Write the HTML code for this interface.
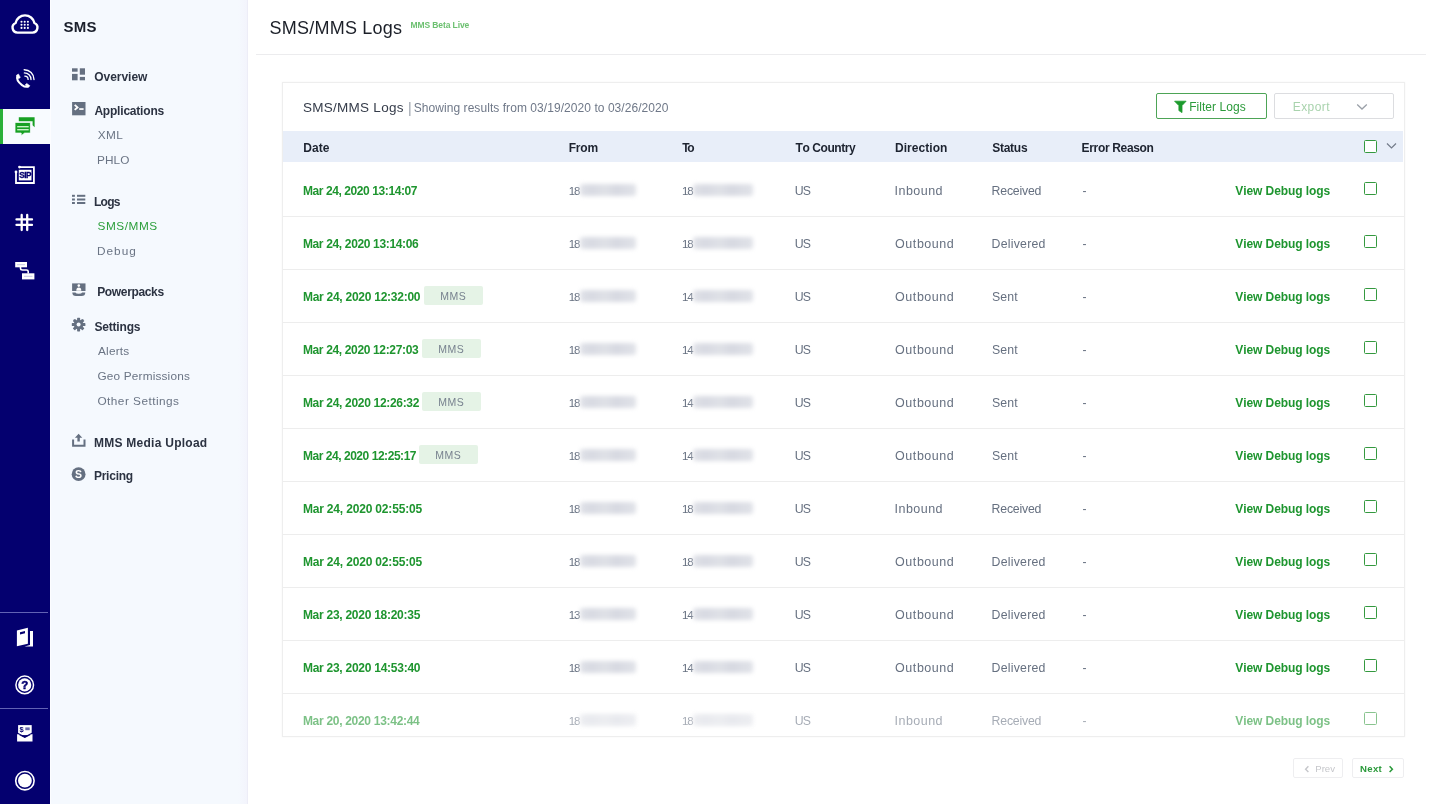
<!DOCTYPE html>
<html><head><meta charset="utf-8"><title>SMS/MMS Logs</title>
<style>
html,body{margin:0;padding:0;width:1440px;height:804px;overflow:hidden;background:#fff;font-family:"Liberation Sans", sans-serif;}
#root{position:absolute;left:0;top:0;width:1440px;height:804px;will-change:transform;}
.t{position:absolute;white-space:nowrap;font-kerning:none;}
.blur{position:absolute;height:12px;background:linear-gradient(90deg,#e0e2e8 0,#d8dae2 20%,#dfe1e7 45%,#d7d9e1 65%,#dddfe6 85%,#e0e2e8 100%);border-radius:3px;filter:blur(1.9px);}
</style></head><body><div id="root">
<div style="position:absolute;left:0;top:0;width:50px;height:804px;background:#04006f"></div><div style="position:absolute;left:0;top:109px;width:50px;height:35px;background:#f8fbff"></div><div style="position:absolute;left:0;top:109px;width:3px;height:35px;background:#2bb03a"></div><div style="position:absolute;left:0;top:612px;width:48px;height:1px;background:#6262b4"></div><div style="position:absolute;left:0;top:708px;width:48px;height:1px;background:#6262b4"></div><svg style="position:absolute;left:0;top:0" width="50" height="804" viewBox="0 0 50 804">
<!-- cloud logo -->
<path d="M17.5,32.6 A5,5 0 0 1 15.6,23 A9.6,9.6 0 0 1 34.4,23 A5,5 0 0 1 32.5,32.6 Z" fill="none" stroke="#fff" stroke-width="2.4" stroke-linejoin="round"/>
<g fill="#fff">
<circle cx="21.5" cy="21.7" r="1.05"/><circle cx="24.7" cy="21.7" r="1.05"/><circle cx="27.9" cy="21.7" r="1.05"/>
<circle cx="21.5" cy="24.8" r="1.05"/><circle cx="24.7" cy="24.8" r="1.05"/><circle cx="27.9" cy="24.8" r="1.05"/>
<circle cx="21.5" cy="27.9" r="1.05"/><circle cx="24.7" cy="27.9" r="1.05"/><circle cx="27.9" cy="27.9" r="1.05"/>
</g>
<!-- phone -->
<path d="M17.4,75.6 C16.3,78.8 18.6,82.6 22,85.1 C24.6,87 27,87.2 28.4,86.1" fill="none" stroke="#fff" stroke-width="2" stroke-linecap="round"/>
<path d="M16.6,75.6 L18.4,74 L20.3,77.4 L18.6,78.7 Z" fill="#fff" stroke="#fff" stroke-width="0.6" stroke-linejoin="round"/>
<path d="M25.2,85 L26.7,83.4 L29.8,85.7 L28.3,87.3 Z" fill="#fff" stroke="#fff" stroke-width="0.6" stroke-linejoin="round"/>
<g fill="none" stroke="#fff" stroke-width="1.35" stroke-linecap="round">
<path d="M24.2,69.7 A9.8,9.8 0 0 1 34,79.5"/>
<path d="M24.4,72.9 A6.6,6.6 0 0 1 31,79.5"/>
<path d="M24.8,76.1 A3.3,3.3 0 0 1 28.1,79.4"/>
</g>
<!-- chat (active) -->
<path d="M18.8,117.2 H34.6 V127.3 L32.6,125.3 V121.3 H18.8 Z" fill="#18a024"/>
<path d="M15,122.4 H30.4 V133.1 H24.6 L21.2,135.8 V133.1 H15 Z" fill="#18a024" stroke="#f8fbff" stroke-width="0.8"/>
<rect x="17.2" y="126" width="11.5" height="1.4" fill="#c9f2c9"/>
<rect x="17.2" y="129" width="11.5" height="1.4" fill="#c9f2c9"/>
<!-- SIP -->
<path d="M19.5,167.2 H33.9 V183 H16 V172.2" fill="none" stroke="#fff" stroke-width="1.8"/>
<circle cx="19.5" cy="167.1" r="1.4" fill="#fff"/><circle cx="16" cy="172" r="1.4" fill="#fff"/>
<rect x="18.8" y="169.8" width="12.7" height="10.6" fill="#fff"/>
<text x="25.15" y="178.4" text-anchor="middle" font-family="Liberation Sans" font-weight="700" font-size="8.2" fill="#04006f" stroke="#04006f" stroke-width="0.3" letter-spacing="-0.5">SIP</text>
<!-- hash -->
<g stroke="#fff" stroke-width="2.3" stroke-linecap="round">
<path d="M21.7,215 V230"/><path d="M27.2,215 V230"/><path d="M16.5,219.4 H32"/><path d="M16.5,224.9 H32"/>
</g>
<!-- flow -->
<rect x="15.2" y="262" width="11.8" height="5.3" fill="#fff"/>
<rect x="22" y="273.3" width="12.4" height="6.1" fill="#fff"/>
<path d="M20.5,267 V268.3 Q20.5,270 22.5,270 H26.5 Q28.2,270 28.2,271.6 V273.5" fill="none" stroke="#fff" stroke-width="1.6"/>
<g fill="#c8c8e8"><rect x="17" y="264.2" width="8" height="1"/><rect x="24" y="275.8" width="8.5" height="1"/></g>
<!-- docs -->
<path d="M16.9,630.6 L27.9,627.8 V643.7 L16.9,646.2 Z" fill="#fff"/>
<rect x="20" y="632" width="5" height="2.2" fill="#04006f" transform="skewY(-14) translate(0,5.3)"/>
<path d="M30,631 H33 V646.4 H24.5 L30,645 Z" fill="#fff"/>
<!-- help -->
<circle cx="24.7" cy="684.9" r="8.8" fill="none" stroke="#fff" stroke-width="1.5"/>
<circle cx="24.7" cy="684.9" r="6.6" fill="#fff"/>
<text x="24.7" y="689.2" text-anchor="middle" font-family="Liberation Sans" font-weight="700" font-size="11.5" fill="#04006f" stroke="#04006f" stroke-width="0.5">?</text>
<!-- envelope -->
<rect x="18.1" y="725.1" width="13.6" height="10" fill="#fff"/>
<text x="21.5" y="731.8" text-anchor="middle" font-family="Liberation Sans" font-weight="700" font-size="7.5" fill="#04006f">$</text>
<rect x="25.3" y="727.4" width="4.4" height="2.8" fill="#6a6aae"/>
<path d="M17.1,733.9 L24.8,737.9 L32.5,733.9 V741.6 H17.1 Z" fill="#fff"/>
<path d="M17.1,732.9 L24.8,736.9 L32.5,732.9" fill="none" stroke="#04006f" stroke-width="1.1"/>
<!-- avatar -->
<circle cx="24.9" cy="780.7" r="9.2" fill="none" stroke="#fff" stroke-width="1.6"/>
<circle cx="24.9" cy="780.7" r="6.9" fill="#fff"/>
</svg><div style="position:absolute;left:50px;top:0;width:198px;height:804px;background:linear-gradient(to right,#f5f9fe 0,#f5f9fe 188px,#f3f4fc 197px);border-right:1px solid #ededf7;box-sizing:border-box"></div><div class="t " style="left:63.57px;top:18.90px;font-size:15px;line-height:15px;font-weight:700;color:#1a1f2b;letter-spacing:0.257px;">SMS</div><div class="t " style="left:94.21px;top:71.24px;font-size:12px;line-height:12px;font-weight:700;color:#2c3342;letter-spacing:-0.028px;">Overview</div><div class="t " style="left:94.40px;top:105.34px;font-size:12px;line-height:12px;font-weight:700;color:#2c3342;letter-spacing:-0.201px;">Applications</div><div class="t " style="left:97.73px;top:130.31px;font-size:11.8px;line-height:11.8px;font-weight:400;color:#6a7484;letter-spacing:0.397px;">XML</div><div class="t " style="left:97.03px;top:155.21px;font-size:11.8px;line-height:11.8px;font-weight:400;color:#6a7484;letter-spacing:0.067px;">PHLO</div><div class="t " style="left:94.00px;top:196.24px;font-size:12px;line-height:12px;font-weight:700;color:#2c3342;letter-spacing:-0.723px;">Logs</div><div class="t " style="left:97.46px;top:220.81px;font-size:11.8px;line-height:11.8px;font-weight:400;color:#2a9e3a;letter-spacing:0.567px;">SMS/MMS</div><div class="t " style="left:97.03px;top:245.71px;font-size:11.8px;line-height:11.8px;font-weight:400;color:#6a7484;letter-spacing:1.014px;">Debug</div><div class="t " style="left:97.20px;top:285.94px;font-size:12px;line-height:12px;font-weight:700;color:#2c3342;letter-spacing:-0.349px;">Powerpacks</div><div class="t " style="left:94.45px;top:320.84px;font-size:12px;line-height:12px;font-weight:700;color:#2c3342;letter-spacing:-0.186px;">Settings</div><div class="t " style="left:97.98px;top:346.01px;font-size:11.8px;line-height:11.8px;font-weight:400;color:#6a7484;letter-spacing:0.217px;">Alerts</div><div class="t " style="left:97.41px;top:370.71px;font-size:11.8px;line-height:11.8px;font-weight:400;color:#6a7484;letter-spacing:0.184px;">Geo Permissions</div><div class="t " style="left:97.44px;top:395.71px;font-size:11.8px;line-height:11.8px;font-weight:400;color:#6a7484;letter-spacing:0.474px;">Other Settings</div><div class="t " style="left:93.90px;top:436.64px;font-size:12px;line-height:12px;font-weight:700;color:#2c3342;letter-spacing:0.264px;">MMS Media Upload</div><div class="t " style="left:93.90px;top:469.84px;font-size:12px;line-height:12px;font-weight:700;color:#2c3342;letter-spacing:-0.228px;">Pricing</div><svg style="position:absolute;left:50px;top:0" width="198" height="804" viewBox="50 0 198 804">
<g fill="#657081">
<!-- overview -->
<rect x="72" y="68.3" width="5.6" height="3.4"/><rect x="72" y="73.9" width="5.6" height="6.4"/>
<rect x="79.8" y="68.3" width="5.2" height="6.4"/><rect x="79.8" y="76.9" width="5.2" height="3.4"/>
<!-- terminal -->
<rect x="72.1" y="102" width="13.4" height="13.3"/>
<!-- list -->
<rect x="72" y="194.8" width="2.9" height="2"/><rect x="77" y="194.8" width="8.3" height="2"/>
<rect x="72" y="198.5" width="2.9" height="2"/><rect x="77" y="198.5" width="8.3" height="2"/>
<rect x="72" y="202" width="2.9" height="2"/><rect x="77" y="202" width="8.3" height="2"/>
<!-- powerpacks -->
<rect x="72.1" y="283.4" width="13.4" height="7.6"/>
<!-- pricing -->
<circle cx="78.6" cy="474.2" r="6.9"/>
</g>
<path d="M74.7,104.9 L77.5,107.4 L74.7,109.9" fill="none" stroke="#fff" stroke-width="1.9"/>
<rect x="79.2" y="108.2" width="4.4" height="1.7" fill="#fff"/>
<circle cx="78.8" cy="285.6" r="1.3" fill="#fff"/>
<path d="M76.3,290.8 Q76.3,287.6 78.8,287.6 Q81.3,287.6 81.3,290.8 Z" fill="#fff"/>
<path d="M72.3,292.5 Q72.3,296 76,296 H81.5 Q85.3,296 85.3,292.5 H82.2 Q81.5,293.8 78.8,293.8 Q76,293.8 75.4,292.5 Z" fill="#657081"/>
<!-- gear -->
<g transform="translate(78.6,324.6)" fill="#657081">
<circle r="4.8"/>
<g>
<rect x="-1.5" y="-6.8" width="3" height="13.6" rx="0.6"/>
<rect x="-1.5" y="-6.8" width="3" height="13.6" rx="0.6" transform="rotate(45)"/>
<rect x="-1.5" y="-6.8" width="3" height="13.6" rx="0.6" transform="rotate(90)"/>
<rect x="-1.5" y="-6.8" width="3" height="13.6" rx="0.6" transform="rotate(135)"/>
</g>
<circle r="2" fill="#f5f9fe"/>
</g>
<!-- upload -->
<path d="M73.1,439.6 V445.8 H84.5 V439.6" fill="none" stroke="#657081" stroke-width="2"/>
<path d="M78.6,433.8 L82.3,437.8 H79.8 V441.6 H77.4 V437.8 H74.9 Z" fill="#657081"/>
<text x="78.6" y="478" text-anchor="middle" font-family="Liberation Sans" font-weight="700" font-size="10.5" fill="#fff">S</text>
</svg><div style="position:absolute;left:50px;top:0;width:1px;height:804px;background:#fcfdff"></div><div class="t " style="left:269.58px;top:18.96px;font-size:18px;line-height:18px;font-weight:400;color:#1b1f28;letter-spacing:0.221px;">SMS/MMS Logs</div><div class="t " style="left:410.43px;top:21.40px;font-size:8.5px;line-height:8.5px;font-weight:700;color:#6cc070;letter-spacing:-0.094px;">MMS Beta Live</div><div style="position:absolute;left:256px;top:54px;width:1170px;height:1px;background:#ececee"></div><div style="position:absolute;left:282px;top:82px;width:1123px;height:655px;border:1px solid #eeeeee;box-sizing:border-box;background:#fff;box-shadow:0 0 2px rgba(0,0,0,0.04)"></div><div class="t " style="left:302.89px;top:100.77px;font-size:13.5px;line-height:13.5px;font-weight:400;color:#353c4a;letter-spacing:0.280px;">SMS/MMS Logs</div><div class="t " style="left:407.90px;top:100.75px;font-size:14px;line-height:14px;font-weight:400;color:#9aa1ab;">|</div><div class="t " style="left:413.76px;top:101.54px;font-size:12px;line-height:12px;font-weight:400;color:#6f7888;letter-spacing:0.058px;">Showing results from 03/19/2020 to 03/26/2020</div><div style="position:absolute;left:1156px;top:93px;width:111px;height:26px;border:1.5px solid #4da456;border-radius:2px;box-sizing:border-box"></div><svg style="position:absolute;left:1174px;top:100px" width="13" height="14" viewBox="0 0 13 14"><path d="M0.6,1.2 H12.1 L8,5.6 V12.6 L4.9,10.6 V5.6 Z" fill="#1c9a2c" stroke="#1c9a2c" stroke-width="0.8" stroke-linejoin="round"/></svg><div class="t " style="left:1189.22px;top:100.74px;font-size:12px;line-height:12px;font-weight:400;color:#2b9a3a;letter-spacing:0.040px;">Filter Logs</div><div style="position:absolute;left:1274px;top:93px;width:120px;height:26px;border:1.5px solid #dcdde0;border-radius:2px;box-sizing:border-box"></div><div class="t " style="left:1292.82px;top:100.74px;font-size:12px;line-height:12px;font-weight:400;color:#a9d3ad;letter-spacing:0.398px;">Export</div><svg style="position:absolute;left:1356px;top:102.5px" width="12" height="8" viewBox="0 0 12 8"><path d="M1.2,1.5 L6,6 L10.8,1.5" fill="none" stroke="#9aa0a8" stroke-width="1.3"/></svg><div style="position:absolute;left:283px;top:131px;width:1120px;height:31px;background:#e8eef9"></div><div class="t " style="left:303.20px;top:141.84px;font-size:12px;line-height:12px;font-weight:700;color:#1d2330;letter-spacing:0.068px;">Date</div><div class="t " style="left:568.70px;top:141.84px;font-size:12px;line-height:12px;font-weight:700;color:#1d2330;letter-spacing:-0.184px;">From</div><div class="t " style="left:682.27px;top:141.84px;font-size:12px;line-height:12px;font-weight:700;color:#1d2330;letter-spacing:-2.257px;">To</div><div class="t " style="left:795.57px;top:141.84px;font-size:12px;line-height:12px;font-weight:700;color:#1d2330;letter-spacing:-0.421px;">To Country</div><div class="t " style="left:895.00px;top:141.84px;font-size:12px;line-height:12px;font-weight:700;color:#1d2330;letter-spacing:0.042px;">Direction</div><div class="t " style="left:992.25px;top:141.84px;font-size:12px;line-height:12px;font-weight:700;color:#1d2330;letter-spacing:-0.267px;">Status</div><div class="t " style="left:1081.60px;top:141.84px;font-size:12px;line-height:12px;font-weight:700;color:#1d2330;letter-spacing:-0.334px;">Error Reason</div><div style="position:absolute;left:1364px;top:140px;width:13px;height:13px;border:1.5px solid #34993f;border-radius:1.5px;box-sizing:border-box;background:#fff"></div><svg style="position:absolute;left:1386px;top:141.5px" width="11" height="8" viewBox="0 0 11 8"><path d="M1,1.5 L5.5,6 L10,1.5" fill="none" stroke="#737b8a" stroke-width="1.2"/></svg><div style="position:absolute;left:0;top:0;width:1440px;height:736px;overflow:hidden"><div class="t " style="left:302.90px;top:185.14px;font-size:12px;line-height:12px;font-weight:700;color:#1e952f;letter-spacing:-0.411px;">Mar 24, 2020 13:14:07</div><div class="t " style="left:568.82px;top:185.57px;font-size:11.5px;line-height:11.5px;font-weight:400;color:#667080;letter-spacing:-1.216px;">18</div><div class="blur" style="left:580px;top:184px;width:56px"></div><div class="t " style="left:682.12px;top:185.57px;font-size:11.5px;line-height:11.5px;font-weight:400;color:#667080;letter-spacing:-1.216px;">18</div><div class="blur" style="left:692.5px;top:184px;width:60px"></div><div class="t " style="left:794.75px;top:184.89px;font-size:12.3px;line-height:12.3px;font-weight:400;color:#667080;letter-spacing:-0.873px;">US</div><div class="t " style="left:894.55px;top:184.72px;font-size:12.5px;line-height:12.5px;font-weight:400;color:#667080;letter-spacing:0.462px;">Inbound</div><div class="t " style="left:991.59px;top:184.89px;font-size:12.3px;line-height:12.3px;font-weight:400;color:#667080;letter-spacing:-0.211px;">Received</div><div class="t " style="left:1082.40px;top:185.14px;font-size:12px;line-height:12px;font-weight:400;color:#667080;">-</div><div class="t " style="left:1235.32px;top:185.14px;font-size:12px;line-height:12px;font-weight:700;color:#1e952f;letter-spacing:-0.074px;">View Debug logs</div><div style="position:absolute;left:1364px;top:181.6px;width:13px;height:13px;border:1.5px solid #34993f;border-radius:1.5px;box-sizing:border-box"></div><div style="position:absolute;left:283px;top:216px;width:1121px;height:1px;background:#ededed"></div><div class="t " style="left:302.90px;top:238.14px;font-size:12px;line-height:12px;font-weight:700;color:#1e952f;letter-spacing:-0.346px;">Mar 24, 2020 13:14:06</div><div class="t " style="left:568.82px;top:238.57px;font-size:11.5px;line-height:11.5px;font-weight:400;color:#667080;letter-spacing:-1.216px;">18</div><div class="blur" style="left:580px;top:237px;width:56px"></div><div class="t " style="left:682.12px;top:238.57px;font-size:11.5px;line-height:11.5px;font-weight:400;color:#667080;letter-spacing:-1.216px;">18</div><div class="blur" style="left:692.5px;top:237px;width:60px"></div><div class="t " style="left:794.75px;top:237.89px;font-size:12.3px;line-height:12.3px;font-weight:400;color:#667080;letter-spacing:-0.873px;">US</div><div class="t " style="left:895.11px;top:237.72px;font-size:12.5px;line-height:12.5px;font-weight:400;color:#667080;letter-spacing:0.541px;">Outbound</div><div class="t " style="left:991.59px;top:237.89px;font-size:12.3px;line-height:12.3px;font-weight:400;color:#667080;letter-spacing:0.231px;">Delivered</div><div class="t " style="left:1082.40px;top:238.14px;font-size:12px;line-height:12px;font-weight:400;color:#667080;">-</div><div class="t " style="left:1235.32px;top:238.14px;font-size:12px;line-height:12px;font-weight:700;color:#1e952f;letter-spacing:-0.074px;">View Debug logs</div><div style="position:absolute;left:1364px;top:234.6px;width:13px;height:13px;border:1.5px solid #34993f;border-radius:1.5px;box-sizing:border-box"></div><div style="position:absolute;left:283px;top:269px;width:1121px;height:1px;background:#ededed"></div><div class="t " style="left:302.90px;top:291.14px;font-size:12px;line-height:12px;font-weight:700;color:#1e952f;letter-spacing:-0.258px;">Mar 24, 2020 12:32:00</div><div style="position:absolute;left:424px;top:286px;width:59px;height:19px;background:#e5f3e6;border-radius:2px"></div><div class="t " style="left:440.14px;top:290.61px;font-size:10.5px;line-height:10.5px;font-weight:400;color:#78828f;letter-spacing:0.573px;">MMS</div><div class="t " style="left:568.82px;top:291.57px;font-size:11.5px;line-height:11.5px;font-weight:400;color:#667080;letter-spacing:-1.216px;">18</div><div class="blur" style="left:580px;top:290px;width:56px"></div><div class="t " style="left:682.12px;top:291.57px;font-size:11.5px;line-height:11.5px;font-weight:400;color:#667080;letter-spacing:-1.379px;">14</div><div class="blur" style="left:692.5px;top:290px;width:60px"></div><div class="t " style="left:794.75px;top:290.89px;font-size:12.3px;line-height:12.3px;font-weight:400;color:#667080;letter-spacing:-0.873px;">US</div><div class="t " style="left:895.11px;top:290.72px;font-size:12.5px;line-height:12.5px;font-weight:400;color:#667080;letter-spacing:0.541px;">Outbound</div><div class="t " style="left:992.04px;top:290.89px;font-size:12.3px;line-height:12.3px;font-weight:400;color:#667080;letter-spacing:0.082px;">Sent</div><div class="t " style="left:1082.40px;top:291.14px;font-size:12px;line-height:12px;font-weight:400;color:#667080;">-</div><div class="t " style="left:1235.32px;top:291.14px;font-size:12px;line-height:12px;font-weight:700;color:#1e952f;letter-spacing:-0.074px;">View Debug logs</div><div style="position:absolute;left:1364px;top:287.6px;width:13px;height:13px;border:1.5px solid #34993f;border-radius:1.5px;box-sizing:border-box"></div><div style="position:absolute;left:283px;top:322px;width:1121px;height:1px;background:#ededed"></div><div class="t " style="left:302.90px;top:344.14px;font-size:12px;line-height:12px;font-weight:700;color:#1e952f;letter-spacing:-0.351px;">Mar 24, 2020 12:27:03</div><div style="position:absolute;left:422px;top:339px;width:59px;height:19px;background:#e5f3e6;border-radius:2px"></div><div class="t " style="left:438.14px;top:343.61px;font-size:10.5px;line-height:10.5px;font-weight:400;color:#78828f;letter-spacing:0.573px;">MMS</div><div class="t " style="left:568.82px;top:344.57px;font-size:11.5px;line-height:11.5px;font-weight:400;color:#667080;letter-spacing:-1.216px;">18</div><div class="blur" style="left:580px;top:343px;width:56px"></div><div class="t " style="left:682.12px;top:344.57px;font-size:11.5px;line-height:11.5px;font-weight:400;color:#667080;letter-spacing:-1.379px;">14</div><div class="blur" style="left:692.5px;top:343px;width:60px"></div><div class="t " style="left:794.75px;top:343.89px;font-size:12.3px;line-height:12.3px;font-weight:400;color:#667080;letter-spacing:-0.873px;">US</div><div class="t " style="left:895.11px;top:343.72px;font-size:12.5px;line-height:12.5px;font-weight:400;color:#667080;letter-spacing:0.541px;">Outbound</div><div class="t " style="left:992.04px;top:343.89px;font-size:12.3px;line-height:12.3px;font-weight:400;color:#667080;letter-spacing:0.082px;">Sent</div><div class="t " style="left:1082.40px;top:344.14px;font-size:12px;line-height:12px;font-weight:400;color:#667080;">-</div><div class="t " style="left:1235.32px;top:344.14px;font-size:12px;line-height:12px;font-weight:700;color:#1e952f;letter-spacing:-0.074px;">View Debug logs</div><div style="position:absolute;left:1364px;top:340.6px;width:13px;height:13px;border:1.5px solid #34993f;border-radius:1.5px;box-sizing:border-box"></div><div style="position:absolute;left:283px;top:375px;width:1121px;height:1px;background:#ededed"></div><div class="t " style="left:302.90px;top:397.14px;font-size:12px;line-height:12px;font-weight:700;color:#1e952f;letter-spacing:-0.314px;">Mar 24, 2020 12:26:32</div><div style="position:absolute;left:422px;top:392px;width:59px;height:19px;background:#e5f3e6;border-radius:2px"></div><div class="t " style="left:438.14px;top:396.61px;font-size:10.5px;line-height:10.5px;font-weight:400;color:#78828f;letter-spacing:0.573px;">MMS</div><div class="t " style="left:568.82px;top:397.57px;font-size:11.5px;line-height:11.5px;font-weight:400;color:#667080;letter-spacing:-1.216px;">18</div><div class="blur" style="left:580px;top:396px;width:56px"></div><div class="t " style="left:682.12px;top:397.57px;font-size:11.5px;line-height:11.5px;font-weight:400;color:#667080;letter-spacing:-1.379px;">14</div><div class="blur" style="left:692.5px;top:396px;width:60px"></div><div class="t " style="left:794.75px;top:396.89px;font-size:12.3px;line-height:12.3px;font-weight:400;color:#667080;letter-spacing:-0.873px;">US</div><div class="t " style="left:895.11px;top:396.72px;font-size:12.5px;line-height:12.5px;font-weight:400;color:#667080;letter-spacing:0.541px;">Outbound</div><div class="t " style="left:992.04px;top:396.89px;font-size:12.3px;line-height:12.3px;font-weight:400;color:#667080;letter-spacing:0.082px;">Sent</div><div class="t " style="left:1082.40px;top:397.14px;font-size:12px;line-height:12px;font-weight:400;color:#667080;">-</div><div class="t " style="left:1235.32px;top:397.14px;font-size:12px;line-height:12px;font-weight:700;color:#1e952f;letter-spacing:-0.074px;">View Debug logs</div><div style="position:absolute;left:1364px;top:393.6px;width:13px;height:13px;border:1.5px solid #34993f;border-radius:1.5px;box-sizing:border-box"></div><div style="position:absolute;left:283px;top:428px;width:1121px;height:1px;background:#ededed"></div><div class="t " style="left:302.90px;top:450.14px;font-size:12px;line-height:12px;font-weight:700;color:#1e952f;letter-spacing:-0.456px;">Mar 24, 2020 12:25:17</div><div style="position:absolute;left:419px;top:445px;width:59px;height:19px;background:#e5f3e6;border-radius:2px"></div><div class="t " style="left:435.14px;top:449.61px;font-size:10.5px;line-height:10.5px;font-weight:400;color:#78828f;letter-spacing:0.573px;">MMS</div><div class="t " style="left:568.82px;top:450.57px;font-size:11.5px;line-height:11.5px;font-weight:400;color:#667080;letter-spacing:-1.216px;">18</div><div class="blur" style="left:580px;top:449px;width:56px"></div><div class="t " style="left:682.12px;top:450.57px;font-size:11.5px;line-height:11.5px;font-weight:400;color:#667080;letter-spacing:-1.379px;">14</div><div class="blur" style="left:692.5px;top:449px;width:60px"></div><div class="t " style="left:794.75px;top:449.89px;font-size:12.3px;line-height:12.3px;font-weight:400;color:#667080;letter-spacing:-0.873px;">US</div><div class="t " style="left:895.11px;top:449.72px;font-size:12.5px;line-height:12.5px;font-weight:400;color:#667080;letter-spacing:0.541px;">Outbound</div><div class="t " style="left:992.04px;top:449.89px;font-size:12.3px;line-height:12.3px;font-weight:400;color:#667080;letter-spacing:0.082px;">Sent</div><div class="t " style="left:1082.40px;top:450.14px;font-size:12px;line-height:12px;font-weight:400;color:#667080;">-</div><div class="t " style="left:1235.32px;top:450.14px;font-size:12px;line-height:12px;font-weight:700;color:#1e952f;letter-spacing:-0.074px;">View Debug logs</div><div style="position:absolute;left:1364px;top:446.6px;width:13px;height:13px;border:1.5px solid #34993f;border-radius:1.5px;box-sizing:border-box"></div><div style="position:absolute;left:283px;top:481px;width:1121px;height:1px;background:#ededed"></div><div class="t " style="left:302.90px;top:503.14px;font-size:12px;line-height:12px;font-weight:700;color:#1e952f;letter-spacing:-0.176px;">Mar 24, 2020 02:55:05</div><div class="t " style="left:568.82px;top:503.57px;font-size:11.5px;line-height:11.5px;font-weight:400;color:#667080;letter-spacing:-1.216px;">18</div><div class="blur" style="left:580px;top:502px;width:56px"></div><div class="t " style="left:682.12px;top:503.57px;font-size:11.5px;line-height:11.5px;font-weight:400;color:#667080;letter-spacing:-1.216px;">18</div><div class="blur" style="left:692.5px;top:502px;width:60px"></div><div class="t " style="left:794.75px;top:502.89px;font-size:12.3px;line-height:12.3px;font-weight:400;color:#667080;letter-spacing:-0.873px;">US</div><div class="t " style="left:894.55px;top:502.72px;font-size:12.5px;line-height:12.5px;font-weight:400;color:#667080;letter-spacing:0.462px;">Inbound</div><div class="t " style="left:991.59px;top:502.89px;font-size:12.3px;line-height:12.3px;font-weight:400;color:#667080;letter-spacing:-0.211px;">Received</div><div class="t " style="left:1082.40px;top:503.14px;font-size:12px;line-height:12px;font-weight:400;color:#667080;">-</div><div class="t " style="left:1235.32px;top:503.14px;font-size:12px;line-height:12px;font-weight:700;color:#1e952f;letter-spacing:-0.074px;">View Debug logs</div><div style="position:absolute;left:1364px;top:499.6px;width:13px;height:13px;border:1.5px solid #34993f;border-radius:1.5px;box-sizing:border-box"></div><div style="position:absolute;left:283px;top:534px;width:1121px;height:1px;background:#ededed"></div><div class="t " style="left:302.90px;top:556.14px;font-size:12px;line-height:12px;font-weight:700;color:#1e952f;letter-spacing:-0.176px;">Mar 24, 2020 02:55:05</div><div class="t " style="left:568.82px;top:556.57px;font-size:11.5px;line-height:11.5px;font-weight:400;color:#667080;letter-spacing:-1.216px;">18</div><div class="blur" style="left:580px;top:555px;width:56px"></div><div class="t " style="left:682.12px;top:556.57px;font-size:11.5px;line-height:11.5px;font-weight:400;color:#667080;letter-spacing:-1.216px;">18</div><div class="blur" style="left:692.5px;top:555px;width:60px"></div><div class="t " style="left:794.75px;top:555.89px;font-size:12.3px;line-height:12.3px;font-weight:400;color:#667080;letter-spacing:-0.873px;">US</div><div class="t " style="left:895.11px;top:555.72px;font-size:12.5px;line-height:12.5px;font-weight:400;color:#667080;letter-spacing:0.541px;">Outbound</div><div class="t " style="left:991.59px;top:555.89px;font-size:12.3px;line-height:12.3px;font-weight:400;color:#667080;letter-spacing:0.231px;">Delivered</div><div class="t " style="left:1082.40px;top:556.14px;font-size:12px;line-height:12px;font-weight:400;color:#667080;">-</div><div class="t " style="left:1235.32px;top:556.14px;font-size:12px;line-height:12px;font-weight:700;color:#1e952f;letter-spacing:-0.074px;">View Debug logs</div><div style="position:absolute;left:1364px;top:552.6px;width:13px;height:13px;border:1.5px solid #34993f;border-radius:1.5px;box-sizing:border-box"></div><div style="position:absolute;left:283px;top:587px;width:1121px;height:1px;background:#ededed"></div><div class="t " style="left:302.90px;top:609.14px;font-size:12px;line-height:12px;font-weight:700;color:#1e952f;letter-spacing:-0.266px;">Mar 23, 2020 18:20:35</div><div class="t " style="left:568.82px;top:609.57px;font-size:11.5px;line-height:11.5px;font-weight:400;color:#667080;letter-spacing:-1.210px;">13</div><div class="blur" style="left:580px;top:608px;width:56px"></div><div class="t " style="left:682.12px;top:609.57px;font-size:11.5px;line-height:11.5px;font-weight:400;color:#667080;letter-spacing:-1.379px;">14</div><div class="blur" style="left:692.5px;top:608px;width:60px"></div><div class="t " style="left:794.75px;top:608.89px;font-size:12.3px;line-height:12.3px;font-weight:400;color:#667080;letter-spacing:-0.873px;">US</div><div class="t " style="left:895.11px;top:608.72px;font-size:12.5px;line-height:12.5px;font-weight:400;color:#667080;letter-spacing:0.541px;">Outbound</div><div class="t " style="left:991.59px;top:608.89px;font-size:12.3px;line-height:12.3px;font-weight:400;color:#667080;letter-spacing:0.231px;">Delivered</div><div class="t " style="left:1082.40px;top:609.14px;font-size:12px;line-height:12px;font-weight:400;color:#667080;">-</div><div class="t " style="left:1235.32px;top:609.14px;font-size:12px;line-height:12px;font-weight:700;color:#1e952f;letter-spacing:-0.074px;">View Debug logs</div><div style="position:absolute;left:1364px;top:605.6px;width:13px;height:13px;border:1.5px solid #34993f;border-radius:1.5px;box-sizing:border-box"></div><div style="position:absolute;left:283px;top:640px;width:1121px;height:1px;background:#ededed"></div><div class="t " style="left:302.90px;top:662.14px;font-size:12px;line-height:12px;font-weight:700;color:#1e952f;letter-spacing:-0.258px;">Mar 23, 2020 14:53:40</div><div class="t " style="left:568.82px;top:662.57px;font-size:11.5px;line-height:11.5px;font-weight:400;color:#667080;letter-spacing:-1.216px;">18</div><div class="blur" style="left:580px;top:661px;width:56px"></div><div class="t " style="left:682.12px;top:662.57px;font-size:11.5px;line-height:11.5px;font-weight:400;color:#667080;letter-spacing:-1.379px;">14</div><div class="blur" style="left:692.5px;top:661px;width:60px"></div><div class="t " style="left:794.75px;top:661.89px;font-size:12.3px;line-height:12.3px;font-weight:400;color:#667080;letter-spacing:-0.873px;">US</div><div class="t " style="left:895.11px;top:661.72px;font-size:12.5px;line-height:12.5px;font-weight:400;color:#667080;letter-spacing:0.541px;">Outbound</div><div class="t " style="left:991.59px;top:661.89px;font-size:12.3px;line-height:12.3px;font-weight:400;color:#667080;letter-spacing:0.231px;">Delivered</div><div class="t " style="left:1082.40px;top:662.14px;font-size:12px;line-height:12px;font-weight:400;color:#667080;">-</div><div class="t " style="left:1235.32px;top:662.14px;font-size:12px;line-height:12px;font-weight:700;color:#1e952f;letter-spacing:-0.074px;">View Debug logs</div><div style="position:absolute;left:1364px;top:658.6px;width:13px;height:13px;border:1.5px solid #34993f;border-radius:1.5px;box-sizing:border-box"></div><div style="position:absolute;left:283px;top:693px;width:1121px;height:1px;background:#ededed"></div><div class="t " style="left:302.90px;top:715.14px;font-size:12px;line-height:12px;font-weight:700;color:#1e952f;letter-spacing:-0.294px;">Mar 20, 2020 13:42:44</div><div class="t " style="left:568.82px;top:715.57px;font-size:11.5px;line-height:11.5px;font-weight:400;color:#667080;letter-spacing:-1.216px;">18</div><div class="blur" style="left:580px;top:714px;width:56px"></div><div class="t " style="left:682.12px;top:715.57px;font-size:11.5px;line-height:11.5px;font-weight:400;color:#667080;letter-spacing:-1.216px;">18</div><div class="blur" style="left:692.5px;top:714px;width:60px"></div><div class="t " style="left:794.75px;top:714.89px;font-size:12.3px;line-height:12.3px;font-weight:400;color:#667080;letter-spacing:-0.873px;">US</div><div class="t " style="left:894.55px;top:714.72px;font-size:12.5px;line-height:12.5px;font-weight:400;color:#667080;letter-spacing:0.462px;">Inbound</div><div class="t " style="left:991.59px;top:714.89px;font-size:12.3px;line-height:12.3px;font-weight:400;color:#667080;letter-spacing:-0.211px;">Received</div><div class="t " style="left:1082.40px;top:715.14px;font-size:12px;line-height:12px;font-weight:400;color:#667080;">-</div><div class="t " style="left:1235.32px;top:715.14px;font-size:12px;line-height:12px;font-weight:700;color:#1e952f;letter-spacing:-0.074px;">View Debug logs</div><div style="position:absolute;left:1364px;top:711.6px;width:13px;height:13px;border:1.5px solid #34993f;border-radius:1.5px;box-sizing:border-box"></div></div><div style="position:absolute;left:283px;top:695px;width:1120px;height:41px;background:rgba(255,255,255,0.42)"></div><div style="position:absolute;left:1293px;top:758px;width:50px;height:20px;border:1px solid #eeeef0;border-radius:2px;box-sizing:border-box"></div><svg style="position:absolute;left:1303px;top:764px" width="8" height="10" viewBox="0 0 8 10"><path d="M5.4,2.3 L2.6,5.2 L5.4,8.1" fill="none" stroke="#c6c7cb" stroke-width="1.4"/></svg><div class="t " style="left:1315.21px;top:764.47px;font-size:9.6px;line-height:9.6px;font-weight:400;color:#c6c7cb;letter-spacing:0.027px;">Prev</div><div style="position:absolute;left:1352px;top:758px;width:52px;height:20px;border:1px solid #eeeef0;border-radius:2px;box-sizing:border-box"></div><div class="t " style="left:1360.06px;top:764.47px;font-size:9.6px;line-height:9.6px;font-weight:700;color:#2a9a3a;letter-spacing:0.317px;">Next</div><svg style="position:absolute;left:1387px;top:764px" width="8" height="10" viewBox="0 0 8 10"><path d="M2.6,2.3 L5.4,5.2 L2.6,8.1" fill="none" stroke="#2a9a3a" stroke-width="1.5"/></svg>
</div></body></html>
